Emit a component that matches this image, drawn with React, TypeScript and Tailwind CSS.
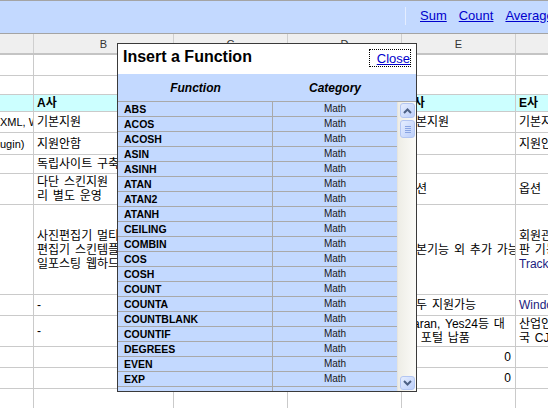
import React from 'react';

// Spreadsheet page with the "Insert a Function" dialog open over it.

type Line = string | { s: string; c: string };
type CellDef = { t?: Line | Line[]; b?: boolean; right?: boolean; flush?: boolean } | null;

const COL_W = ['w-[34px]', 'w-[140px]', 'w-[114px]', 'w-[114px]', 'w-[114px]', 'w-[114px]'];
const LETTERS = ['', 'B', 'C', 'D', 'E', ''];
const LINK = 'text-[#1c1c80]';

const ROWS: { h: string; bg?: string; cells: CellDef[] }[] = [
  { h: 'h-[21px]', cells: [] },
  { h: 'h-[19px]', cells: [] },
  {
    h: 'h-[17px]',
    bg: 'bg-[#ccffff]',
    cells: [null, { t: 'A사', b: true }, { t: 'B사', b: true }, { t: 'C사', b: true }, { t: 'D사', b: true }, { t: 'E사', b: true }],
  },
  {
    h: 'h-[21px]',
    cells: [{ t: 'XML, WYSIWYG', flush: true }, { t: '기본지원' }, { t: '기본지원' }, { t: '기본지원' }, { t: '기본지원' }, { t: '기본지원' }],
  },
  { h: 'h-[22px]', cells: [{ t: 'ugin)', flush: true }, { t: '지원안함' }, { t: '지원' }, null, null, { t: '지원안함' }] },
  { h: 'h-[19px]', cells: [null, { t: '독립사이트 구축' }] },
  {
    h: 'h-[31px]',
    cells: [null, { t: ['다단 스킨지원\u00a0\u00a0카테고', '리 별도 운영'] }, { t: '지원' }, null, { t: '옵션' }, { t: '옵션' }],
  },
  {
    h: 'h-[90px]',
    cells: [
      null,
      { t: ['사진편집기 멀티미디어', '편집기 스킨템플릿 지원', '일포스팅 웹하드 연동'] },
      null,
      null,
      { t: '기본기능 외 추가 가능' },
      { t: ['회원관리 및 게시', '판 기능 제공', { s: 'Trackback', c: LINK }] },
    ],
  },
  { h: 'h-[21px]', cells: [null, { t: '-' }, null, null, { t: '모두 지원가능' }, { t: { s: 'Windows', c: LINK } }] },
  {
    h: 'h-[31px]',
    cells: [null, { t: '-' }, null, null, { t: ['Paran, Yes24등 대', '형 포털 납품'] }, { t: ['산업인력공단, 한', '국 CJ'] }],
  },
  { h: 'h-[21px]', cells: [null, null, null, null, { t: '0', right: true }] },
  { h: 'h-[21px]', cells: [null, null, null, null, { t: '0', right: true }] },
  { h: 'h-[21px]', cells: [] },
];

// last entry is the row that is only peeking in under EXP
const FUNCS = [
  'ABS', 'ACOS', 'ACOSH', 'ASIN', 'ASINH', 'ATAN', 'ATAN2', 'ATANH', 'CEILING', 'COMBIN',
  'COS', 'COSH', 'COUNT', 'COUNTA', 'COUNTBLANK', 'COUNTIF', 'DEGREES', 'EVEN', 'EXP', '',
];

function renderLine(l: Line, i: number) {
  if (typeof l === 'string') return <div key={i} className="whitespace-nowrap leading-[14px]">{l}</div>;
  return <div key={i} className={`whitespace-nowrap leading-[14px] ${l.c}`}>{l.s}</div>;
}

function Cell({ def, w }: { def: CellDef; w: string }) {
  const lines = def?.t === undefined ? [] : Array.isArray(def.t) ? def.t : [def.t];
  return (
    <div
      className={`${w} shrink-0 h-full border-r border-[#cacaca] overflow-hidden flex flex-col justify-center ${
        def?.right
          ? 'items-end pr-[4px]'
          : def?.flush
            ? 'items-start text-[11px]'
            : 'items-start pl-[3px] [word-spacing:1.5px]'
      } ${def?.b ? 'font-bold' : ''}`}
    >
      {lines.map(renderLine)}
    </div>
  );
}

function Chevron({ up }: { up?: boolean }) {
  return (
    <svg width="9" height="6" viewBox="0 0 9 6">
      <polyline
        points={up ? '1,5 4.5,1.5 8,5' : '1,1 4.5,4.5 8,1'}
        fill="none"
        stroke="#4d6185"
        strokeWidth="2"
      />
    </svg>
  );
}

function XpButton({ children, h }: { children?: React.ReactNode; h: string }) {
  return (
    <div
      className={`w-[15px] ${h} shrink-0 rounded-[3px] border border-[#b3c6f2] bg-gradient-to-br from-[#e6eeff] to-[#bccffa] flex items-center justify-center`}
    >
      {children}
    </div>
  );
}

function FunctionDialog() {
  return (
    <div className="absolute left-[117px] top-[43px] w-[300px] h-[349px] border border-[#3a3a3a] bg-white flex flex-col [font-family:'Liberation_Sans',Arial,sans-serif]">
      {/* title bar */}
      <div className="h-[30px] shrink-0 flex items-start justify-between pl-[5px] pr-[6px]">
        <span className="pt-[4px] text-[16px] leading-[18px] font-bold text-black">Insert a Function</span>
        <span className="mt-[6px] h-[16px] pl-[7px] outline-1 outline-dotted outline-black flex items-center text-[13px] leading-[15px] text-[#0000cc] underline">
          Close
        </span>
      </div>

      {/* column headings */}
      <div className="h-[28px] shrink-0 flex bg-[#c3d9ff] border-b border-[#a9a9a9] text-[12px] font-bold italic text-black">
        <div className="w-[155px] flex items-center justify-center">Function</div>
        <div className="w-[124px] flex items-center justify-center">Category</div>
        <div className="flex-1" />
      </div>

      {/* list + scrollbar */}
      <div className="flex-1 min-h-0 flex">
        <div className="w-[279px] overflow-hidden bg-[#c3d9ff]">
          {FUNCS.map((f, i) => (
            <div key={i} className="h-[15px] flex border-b border-[#a9a9a9]">
              <div className="w-[155px] shrink-0 border-r border-[#a9a9a9] pl-[6px] flex items-center text-[10.5px] font-bold text-black leading-none">
                {f}
              </div>
              <div className="flex-1 flex items-center justify-center text-[10px] text-[#1a1a1a] leading-none">
                {f ? 'Math' : ''}
              </div>
            </div>
          ))}
        </div>
        <div className="flex-1 flex flex-col items-center justify-between py-[1px] pl-[1px] bg-gradient-to-r from-[#eeede6] to-[#fbfbf8] border-l border-[#e6e5de]">
          <div className="flex flex-col items-center gap-[2px]">
            <XpButton h="h-[15px]">
              <Chevron up />
            </XpButton>
            <XpButton h="h-[18px]">
              <div className="flex flex-col gap-[1px]">
                <div className="w-[6px] h-px bg-[#8aa5e2]" />
                <div className="w-[6px] h-px bg-[#8aa5e2]" />
                <div className="w-[6px] h-px bg-[#8aa5e2]" />
                <div className="w-[6px] h-px bg-[#8aa5e2]" />
              </div>
            </XpButton>
          </div>
          <XpButton h="h-[14px]">
            <Chevron />
          </XpButton>
        </div>
      </div>
    </div>
  );
}

export default function App() {
  return (
    <div className="relative w-[548px] h-[408px] overflow-hidden bg-white [font-family:'Liberation_Sans','Noto_Sans_CJK_KR',sans-serif] text-[12px] text-black">
      {/* toolbar */}
      <div className="h-[34px] bg-[#c3d9ff] border-t border-b border-[#a4a4a4] flex items-center pl-[405px] pb-[3px] text-[13px]">
        <div className="w-px h-[18px] bg-[#e4edff] shrink-0" />
        <a className="ml-[14px] text-[#0000cc] underline whitespace-nowrap">Sum</a>
        <a className="ml-[12px] text-[#0000cc] underline whitespace-nowrap">Count</a>
        <a className="ml-[12px] text-[#0000cc] underline whitespace-nowrap">Average</a>
      </div>

      {/* column header */}
      <div className="h-[21px] flex bg-[#efefef] border-b-2 border-[#c4c4c4] text-[11px] text-[#333]">
        {COL_W.map((w, i) => (
          <div key={i} className={`${w} shrink-0 border-r border-[#cfcfcf] flex items-center justify-center pt-[2px]`}>
            {LETTERS[i]}
          </div>
        ))}
      </div>

      {/* rows */}
      {ROWS.map((r, ri) => (
        <div key={ri} className={`${r.h} flex border-b border-[#cacaca] ${r.bg ?? ''}`}>
          {COL_W.map((w, ci) => (
            <Cell key={ci} def={r.cells[ci] ?? null} w={w} />
          ))}
        </div>
      ))}

      <FunctionDialog />
    </div>
  );
}
